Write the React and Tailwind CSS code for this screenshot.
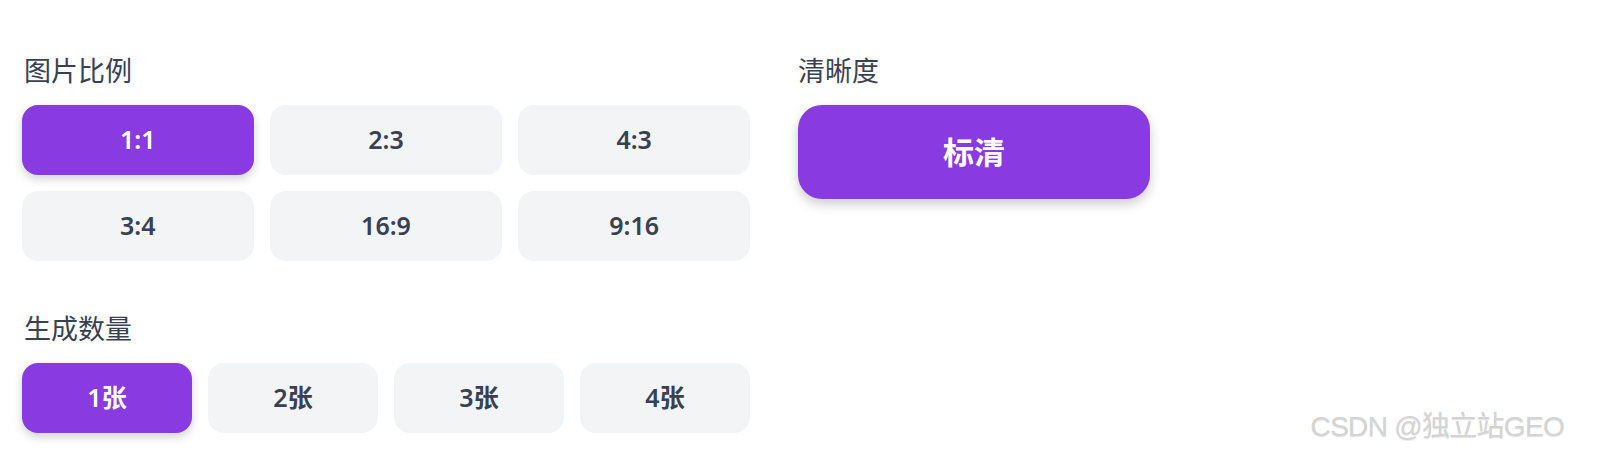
import React, { useState } from 'react';

const ratios = ['1:1', '2:3', '4:3', '3:4', '16:9', '9:16'];
const counts = ['1张', '2张', '3张', '4张'];

function OptionButton({ label, active, onClick, className = '' }) {
  return (
    <button
      onClick={onClick}
      className={
        'h-[70px] rounded-2xl text-[25px] font-semibold transition-colors ' +
        (active
          ? 'bg-[#8a3ae1] text-white shadow-[0_4px_10px_rgba(0,0,0,0.18)] '
          : 'bg-[#f3f4f6] text-[#374151] ') +
        className
      }
    >
      {label}
    </button>
  );
}

export default function App() {
  const [ratio, setRatio] = useState('1:1');
  const [count, setCount] = useState('1张');

  return (
    <div
      className="relative w-[1602px] h-[468px] bg-white overflow-hidden"
      style={{ fontFamily: '"Noto Sans", "Noto Sans CJK SC", sans-serif' }}
    >
      <div className="flex gap-12 pl-[22px] pt-[53px]">
        {/* Left column */}
        <div className="w-[728px]">
          <h3 className="text-[27px] leading-9 text-[#374151] mb-[16px] pl-[2px]">图片比例</h3>
          <div className="grid grid-cols-3 gap-x-[16.5px] gap-y-4">
            {ratios.map((r) => (
              <OptionButton key={r} label={r} active={ratio === r} onClick={() => setRatio(r)} />
            ))}
          </div>

          <h3 className="text-[27px] leading-9 text-[#374151] mt-[50px] mb-[16px] pl-[2px]">生成数量</h3>
          <div className="grid grid-cols-4 gap-x-4">
            {counts.map((c) => (
              <OptionButton key={c} label={c} active={count === c} onClick={() => setCount(c)} />
            ))}
          </div>
        </div>

        {/* Right column */}
        <div className="w-[352px]">
          <h3 className="text-[27px] leading-9 text-[#374151] mb-[16px]">清晰度</h3>
          <button className="w-full h-[94px] rounded-3xl bg-[#8a3ae1] text-white text-[31px] font-bold shadow-[0_5px_12px_rgba(0,0,0,0.2)]">
            标清
          </button>
        </div>
      </div>

      {/* Watermark */}
      <div
        className="absolute right-[38px] bottom-[20px] text-[28px] text-[#d4d4d4] tracking-tight"
        style={{ fontFamily: '"Liberation Sans", "Noto Sans CJK SC", sans-serif', textShadow: '0 1px 1px rgba(0,0,0,0.12)' }}
      >
        CSDN @独立站GEO
      </div>
    </div>
  );
}
